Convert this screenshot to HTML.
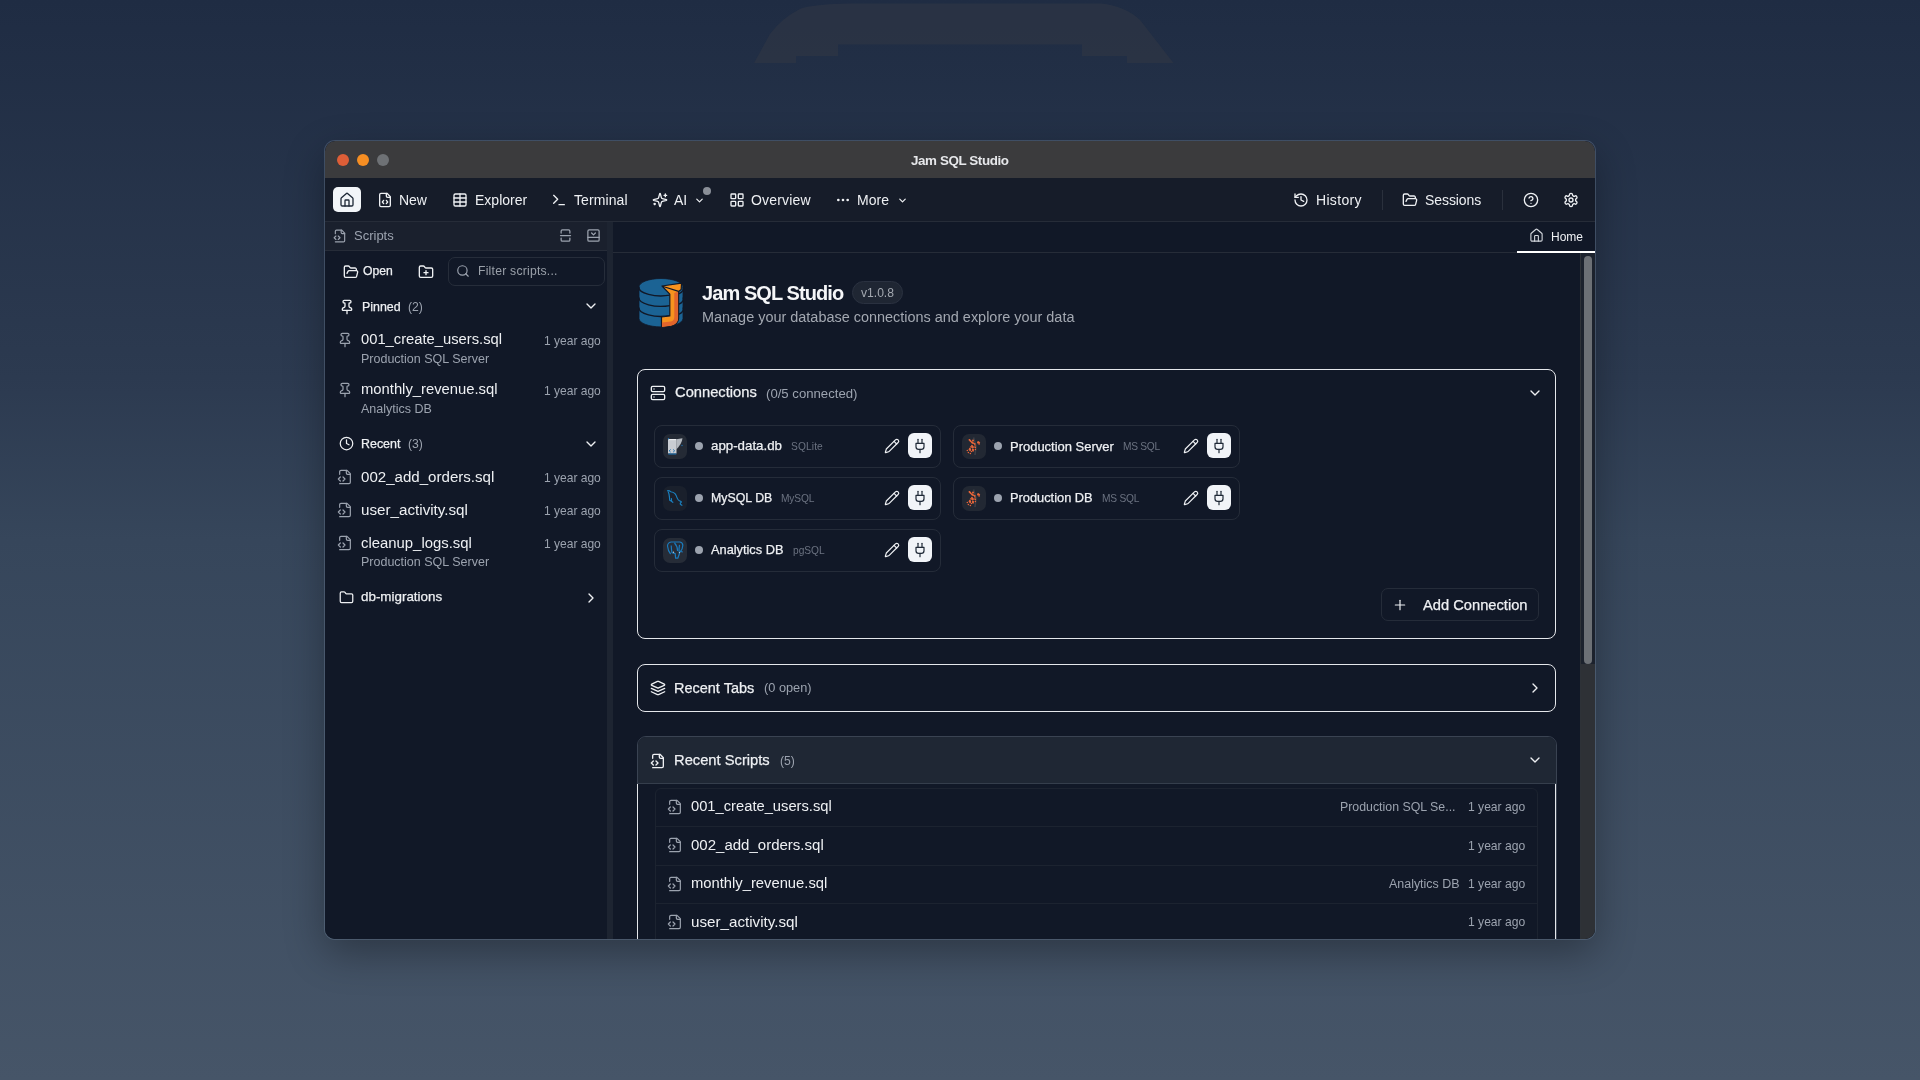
<!DOCTYPE html>
<html><head><meta charset="utf-8"><style>
html,body{margin:0;padding:0;width:1920px;height:1080px;overflow:hidden}
body{position:relative;background:linear-gradient(180deg,#1f2c43 0%,#2c3a50 35%,#36465b 50%,#465568 100%);font-family:"Liberation Sans",sans-serif}
.t{position:absolute;white-space:nowrap;line-height:1;will-change:transform}
.b{position:absolute}
.i{position:absolute;overflow:visible}
#win{position:absolute;left:325px;top:141px;width:1270px;height:798px;border-radius:10px;overflow:hidden}
</style></head><body>
<svg class="i" style="left:0;top:0;width:1920px;height:80px" viewBox="0 0 1920 80"><path d="M754 63 L770 34 Q782 18 800 9 Q812 4 852 3.5 L1101 3.5 Q1125 6 1140 20 L1173.5 63 L1127 63 L1127 56 L1082 56 L1082 44.5 L838 44.5 L838 56 L796 56 L796 63Z" fill="#2c3444" opacity=".85"/></svg>
<div class="b" style="left:325px;top:141px;width:1270px;height:798px;border-radius:10px;background:#111827;box-shadow:0 0 0 1px rgba(120,140,165,.35),0 14px 40px rgba(0,0,0,.32);overflow:hidden"></div>
<div style="position:absolute;left:0;top:0;width:1920px;height:1080px;clip-path:inset(141px 325px 141px 325px round 10px)">
<div class="b" style="left:325px;top:141px;width:1270px;height:37px;background:#3b3b3d;border-radius:10px 10px 0 0"></div>
<div class="b" style="left:337px;top:154px;width:12px;height:12px;border-radius:50%;background:#dd5e37"></div>
<div class="b" style="left:357px;top:154px;width:12px;height:12px;border-radius:50%;background:#f68e23"></div>
<div class="b" style="left:377px;top:154px;width:12px;height:12px;border-radius:50%;background:#6e7175"></div>
<div class="t" style="left:911.00px;top:153.66px;font-size:13.40px;color:#e6e7ea;letter-spacing:-0.404px;font-weight:700;">Jam SQL Studio</div>
<div class="b" style="left:325px;top:178px;width:1270px;height:44px;background:#161c29;border-bottom:1px solid #262c38;box-sizing:border-box"></div>
<div class="b" style="left:333px;top:187px;width:28px;height:25px;background:#f2f5f8;border-radius:5px"></div>
<svg class="i" style="left:339.00px;top:191.60px;width:16px;height:16px" viewBox="0 0 24 24" fill="none" stroke="#1f2937" stroke-width="2" stroke-linecap="round" stroke-linejoin="round"><path d="M15 21v-8a1 1 0 0 0-1-1h-4a1 1 0 0 0-1 1v8"/><path d="M3 10a2 2 0 0 1 .709-1.528l7-5.999a2 2 0 0 1 2.582 0l7 5.999A2 2 0 0 1 21 10v9a2 2 0 0 1-2 2H5a2 2 0 0 1-2-2z"/></svg>
<svg class="i" style="left:377.00px;top:191.80px;width:16px;height:16px" viewBox="0 0 24 24" fill="none" stroke="#eef0f3" stroke-width="2" stroke-linecap="round" stroke-linejoin="round"><path d="M10 12.5 8 15l2 2.5"/><path d="m14 12.5 2 2.5-2 2.5"/><path d="M14 2v4a2 2 0 0 0 2 2h4"/><path d="M15 2H6a2 2 0 0 0-2 2v16a2 2 0 0 0 2 2h12a2 2 0 0 0 2-2V7z"/></svg>
<div class="t" style="left:399.40px;top:192.95px;font-size:14.00px;color:#eef0f3;letter-spacing:-0.035px;">New</div>
<svg class="i" style="left:452.00px;top:191.60px;width:16px;height:16px" viewBox="0 0 24 24" fill="none" stroke="#eef0f3" stroke-width="2" stroke-linecap="round" stroke-linejoin="round"><path d="M12 3v18"/><rect width="18" height="18" x="3" y="3" rx="2"/><path d="M3 9h18"/><path d="M3 15h18"/></svg>
<div class="t" style="left:474.50px;top:192.95px;font-size:14.00px;color:#eef0f3;letter-spacing:0.007px;">Explorer</div>
<svg class="i" style="left:551.00px;top:191.60px;width:16px;height:16px" viewBox="0 0 24 24" fill="none" stroke="#eef0f3" stroke-width="2" stroke-linecap="round" stroke-linejoin="round"><polyline points="4 17 10 11 4 5"/><line x1="12" x2="20" y1="19" y2="19"/></svg>
<div class="t" style="left:574.00px;top:192.95px;font-size:14.00px;color:#eef0f3;letter-spacing:0.097px;">Terminal</div>
<svg class="i" style="left:652.00px;top:191.80px;width:16px;height:16px" viewBox="0 0 24 24" fill="none" stroke="#eef0f3" stroke-width="2" stroke-linecap="round" stroke-linejoin="round"><path d="M9.937 15.5A2 2 0 0 0 8.5 14.063l-6.135-1.582a.5.5 0 0 1 0-.962L8.5 9.936A2 2 0 0 0 9.937 8.5l1.582-6.135a.5.5 0 0 1 .963 0L14.063 8.5A2 2 0 0 0 15.5 9.937l6.135 1.581a.5.5 0 0 1 0 .964L15.5 14.063a2 2 0 0 0-1.437 1.437l-1.582 6.135a.5.5 0 0 1-.963 0z"/><path d="M20 3v4"/><path d="M22 5h-4"/><path d="M4 17v2"/><path d="M5 18H3"/></svg>
<div class="t" style="left:674.30px;top:192.95px;font-size:14.00px;color:#eef0f3;">AI</div>
<svg class="i" style="left:693.80px;top:194.60px;width:11px;height:11px" viewBox="0 0 24 24" fill="none" stroke="#eef0f3" stroke-width="2.6" stroke-linecap="round" stroke-linejoin="round"><path d="m6 9 6 6 6-6"/></svg>
<div class="b" style="left:703px;top:187.2px;width:8px;height:8px;border-radius:50%;background:#8a8f98"></div>
<svg class="i" style="left:728.80px;top:191.70px;width:16px;height:16px" viewBox="0 0 24 24" fill="none" stroke="#eef0f3" stroke-width="2" stroke-linecap="round" stroke-linejoin="round"><rect width="7" height="7" x="3" y="3" rx="1"/><rect width="7" height="7" x="14" y="3" rx="1"/><rect width="7" height="7" x="14" y="14" rx="1"/><rect width="7" height="7" x="3" y="14" rx="1"/></svg>
<div class="t" style="left:751.00px;top:192.95px;font-size:14.00px;color:#eef0f3;letter-spacing:0.174px;">Overview</div>
<svg class="i" style="left:835.00px;top:191.70px;width:16px;height:16px" viewBox="0 0 24 24" fill="none" stroke="#eef0f3" stroke-width="2" stroke-linecap="round" stroke-linejoin="round"><circle cx="12" cy="12" r="1"/><circle cx="19" cy="12" r="1"/><circle cx="5" cy="12" r="1"/></svg>
<div class="t" style="left:857.30px;top:192.95px;font-size:14.00px;color:#eef0f3;letter-spacing:0.060px;">More</div>
<svg class="i" style="left:896.60px;top:194.60px;width:11px;height:11px" viewBox="0 0 24 24" fill="none" stroke="#eef0f3" stroke-width="2.6" stroke-linecap="round" stroke-linejoin="round"><path d="m6 9 6 6 6-6"/></svg>
<svg class="i" style="left:1293.00px;top:191.80px;width:16px;height:16px" viewBox="0 0 24 24" fill="none" stroke="#eef0f3" stroke-width="2" stroke-linecap="round" stroke-linejoin="round"><path d="M3 12a9 9 0 1 0 9-9 9.75 9.75 0 0 0-6.74 2.74L3 8"/><path d="M3 3v5h5"/><path d="M12 7v5l4 2"/></svg>
<div class="t" style="left:1315.50px;top:192.95px;font-size:14.00px;color:#eef0f3;letter-spacing:0.327px;">History</div>
<div class="b" style="left:1382px;top:190px;width:1px;height:20px;background:#2a303c"></div>
<svg class="i" style="left:1402.30px;top:191.80px;width:16px;height:16px" viewBox="0 0 24 24" fill="none" stroke="#eef0f3" stroke-width="2" stroke-linecap="round" stroke-linejoin="round"><path d="m6 14 1.5-2.9A2 2 0 0 1 9.24 10H20a2 2 0 0 1 1.94 2.5l-1.54 6a2 2 0 0 1-1.95 1.5H4a2 2 0 0 1-2-2V5a2 2 0 0 1 2-2h3.9a2 2 0 0 1 1.69.9l.81 1.2a2 2 0 0 0 1.67.9H18a2 2 0 0 1 2 2v2"/></svg>
<div class="t" style="left:1425.00px;top:192.95px;font-size:14.00px;color:#eef0f3;letter-spacing:-0.077px;">Sessions</div>
<div class="b" style="left:1502px;top:190px;width:1px;height:20px;background:#2a303c"></div>
<svg class="i" style="left:1522.80px;top:191.80px;width:16px;height:16px" viewBox="0 0 24 24" fill="none" stroke="#eef0f3" stroke-width="2" stroke-linecap="round" stroke-linejoin="round"><circle cx="12" cy="12" r="10"/><path d="M9.09 9a3 3 0 0 1 5.83 1c0 2-3 3-3 3"/><path d="M12 17h.01"/></svg>
<svg class="i" style="left:1563.00px;top:191.80px;width:16px;height:16px" viewBox="0 0 24 24" fill="none" stroke="#eef0f3" stroke-width="2" stroke-linecap="round" stroke-linejoin="round"><path d="M12.22 2h-.44a2 2 0 0 0-2 2v.18a2 2 0 0 1-1 1.73l-.43.25a2 2 0 0 1-2 0l-.15-.08a2 2 0 0 0-2.73.73l-.22.38a2 2 0 0 0 .73 2.73l.15.1a2 2 0 0 1 1 1.72v.51a2 2 0 0 1-1 1.74l-.15.09a2 2 0 0 0-.73 2.730l.22.38a2 2 0 0 0 2.73.73l.15-.08a2 2 0 0 1 2 0l.43.25a2 2 0 0 1 1 1.73V20a2 2 0 0 0 2 2h.44a2 2 0 0 0 2-2v-.18a2 2 0 0 1 1-1.73l.43-.25a2 2 0 0 1 2 0l.15.08a2 2 0 0 0 2.73-.73l.22-.39a2 2 0 0 0-.73-2.73l-.15-.08a2 2 0 0 1-1-1.74v-.5a2 2 0 0 1 1-1.74l.15-.09a2 2 0 0 0 .73-2.73l-.22-.38a2 2 0 0 0-2.73-.73l-.15.08a2 2 0 0 1-2 0l-.43-.25a2 2 0 0 1-1-1.73V4a2 2 0 0 0-2-2z"/><circle cx="12" cy="12" r="3"/></svg>
<div class="b" style="left:325px;top:222px;width:282px;height:717px;background:#111827"></div>
<div class="b" style="left:325px;top:222px;width:282px;height:29px;background:#1a202d;border-bottom:1px solid #262c38;box-sizing:border-box"></div>
<div class="b" style="left:607px;top:222px;width:6px;height:717px;background:#1d2431"></div>
<svg class="i" style="left:333.08px;top:228.50px;width:14px;height:14px" viewBox="0 0 24 24" fill="none" stroke="#9ca3af" stroke-width="2" stroke-linecap="round" stroke-linejoin="round"><path d="M4 22h14a2 2 0 0 0 2-2V7l-5-5H6a2 2 0 0 0-2 2v4"/><path d="M14 2v4a2 2 0 0 0 2 2h4"/><path d="m5 12-3 3 3 3"/><path d="m9 18 3-3-3-3"/></svg>
<div class="t" style="left:353.50px;top:229.00px;font-size:13.00px;color:#9ca3af;">Scripts</div>
<svg class="i" style="left:557.50px;top:228.00px;width:15px;height:15px" viewBox="0 0 24 24" fill="none" stroke="#9ca3af" stroke-width="2" stroke-linecap="round" stroke-linejoin="round"><path d="M5 8V5c0-1 1-2 2-2h10c1 0 2 1 2 2v3"/><path d="M19 16v3c0 1-1 2-2 2H7c-1 0-2-1-2-2v-3"/><line x1="4" x2="20" y1="12" y2="12"/></svg>
<svg class="i" style="left:585.50px;top:228.00px;width:15px;height:15px" viewBox="0 0 24 24" fill="none" stroke="#9ca3af" stroke-width="2" stroke-linecap="round" stroke-linejoin="round"><rect width="18" height="18" x="3" y="3" rx="2"/><path d="M3 15h18"/><path d="m15 8-3 3-3-3"/></svg>
<svg class="i" style="left:342.70px;top:263.90px;width:16px;height:16px" viewBox="0 0 24 24" fill="none" stroke="#eef0f3" stroke-width="2" stroke-linecap="round" stroke-linejoin="round"><path d="m6 14 1.5-2.9A2 2 0 0 1 9.24 10H20a2 2 0 0 1 1.94 2.5l-1.54 6a2 2 0 0 1-1.95 1.5H4a2 2 0 0 1-2-2V5a2 2 0 0 1 2-2h3.9a2 2 0 0 1 1.69.9l.81 1.2a2 2 0 0 0 1.67.9H18a2 2 0 0 1 2 2v2"/></svg>
<div class="t" style="left:363.40px;top:265.37px;font-size:12.20px;color:#eef0f3;-webkit-text-stroke:0.25px currentColor;">Open</div>
<svg class="i" style="left:417.90px;top:263.90px;width:16px;height:16px" viewBox="0 0 24 24" fill="none" stroke="#eef0f3" stroke-width="2" stroke-linecap="round" stroke-linejoin="round"><path d="M12 10v6"/><path d="M9 13h6"/><path d="M20 20a2 2 0 0 0 2-2V8a2 2 0 0 0-2-2h-7.9a2 2 0 0 1-1.69-.9L9.6 3.9A2 2 0 0 0 7.930 3H4a2 2 0 0 0-2 2v13a2 2 0 0 0 2 2Z"/></svg>
<div class="b" style="left:448px;top:257px;width:157px;height:29px;border:1px solid #262d3a;border-radius:7px;box-sizing:border-box"></div>
<svg class="i" style="left:456.00px;top:264.30px;width:14px;height:14px" viewBox="0 0 24 24" fill="none" stroke="#9ca3af" stroke-width="2" stroke-linecap="round" stroke-linejoin="round"><circle cx="11" cy="11" r="8"/><path d="m21 21-4.3-4.3"/></svg>
<div class="t" style="left:477.80px;top:265.37px;font-size:12.20px;color:#9aa0a9;letter-spacing:0.228px;">Filter scripts...</div>
<svg class="i" style="left:339.00px;top:298.50px;width:16px;height:16px" viewBox="0 0 24 24" fill="none" stroke="#eef0f3" stroke-width="2" stroke-linecap="round" stroke-linejoin="round"><path d="M12 17v5"/><path d="M9 10.76a2 2 0 0 1-1.11 1.79l-1.78.9A2 2 0 0 0 5 15.24V16a1 1 0 0 0 1 1h12a1 1 0 0 0 1-1v-.76a2 2 0 0 0-1.11-1.79l-1.78-.9A2 2 0 0 1 15 10.76V7a1 1 0 0 1 1-1 2 2 0 0 0 0-4H8a2 2 0 0 0 0 4 1 1 0 0 1 1 1z"/></svg>
<div class="t" style="left:361.60px;top:300.90px;font-size:12.40px;color:#eef0f3;-webkit-text-stroke:0.25px currentColor;">Pinned</div>
<div class="t" style="left:407.90px;top:301.07px;font-size:12.20px;color:#9ca3af;">(2)</div>
<svg class="i" style="left:583.00px;top:298.30px;width:16px;height:16px" viewBox="0 0 24 24" fill="none" stroke="#eef0f3" stroke-width="2" stroke-linecap="round" stroke-linejoin="round"><path d="m6 9 6 6 6-6"/></svg>
<svg class="i" style="left:337.00px;top:331.80px;width:16px;height:16px" viewBox="0 0 24 24" fill="none" stroke="#9ca3af" stroke-width="1.8" stroke-linecap="round" stroke-linejoin="round"><path d="M12 17v5"/><path d="M9 10.76a2 2 0 0 1-1.11 1.79l-1.78.9A2 2 0 0 0 5 15.24V16a1 1 0 0 0 1 1h12a1 1 0 0 0 1-1v-.76a2 2 0 0 0-1.11-1.79l-1.78-.9A2 2 0 0 1 15 10.76V7a1 1 0 0 1 1-1 2 2 0 0 0 0-4H8a2 2 0 0 0 0 4 1 1 0 0 1 1 1z"/></svg>
<div class="t" style="left:361.40px;top:332.21px;font-size:14.76px;color:#eef0f3;">001_create_users.sql</div>
<div class="t" style="left:543.60px;top:334.52px;font-size:12.03px;color:#9ca3af;">1 year ago</div>
<div class="t" style="left:361.40px;top:352.62px;font-size:12.50px;color:#9ca3af;">Production SQL Server</div>
<svg class="i" style="left:337.00px;top:381.80px;width:16px;height:16px" viewBox="0 0 24 24" fill="none" stroke="#9ca3af" stroke-width="1.8" stroke-linecap="round" stroke-linejoin="round"><path d="M12 17v5"/><path d="M9 10.76a2 2 0 0 1-1.11 1.79l-1.78.9A2 2 0 0 0 5 15.24V16a1 1 0 0 0 1 1h12a1 1 0 0 0 1-1v-.76a2 2 0 0 0-1.11-1.79l-1.78-.9A2 2 0 0 1 15 10.76V7a1 1 0 0 1 1-1 2 2 0 0 0 0-4H8a2 2 0 0 0 0 4 1 1 0 0 1 1 1z"/></svg>
<div class="t" style="left:361.40px;top:382.17px;font-size:14.80px;color:#eef0f3;">monthly_revenue.sql</div>
<div class="t" style="left:543.60px;top:384.52px;font-size:12.03px;color:#9ca3af;">1 year ago</div>
<div class="t" style="left:361.40px;top:402.62px;font-size:12.50px;color:#9ca3af;">Analytics DB</div>
<svg class="i" style="left:339.20px;top:436.30px;width:15px;height:15px" viewBox="0 0 24 24" fill="none" stroke="#eef0f3" stroke-width="2" stroke-linecap="round" stroke-linejoin="round"><circle cx="12" cy="12" r="10"/><polyline points="12 6 12 12 16 14"/></svg>
<div class="t" style="left:361.30px;top:437.76px;font-size:12.45px;color:#eef0f3;-webkit-text-stroke:0.25px currentColor;">Recent</div>
<div class="t" style="left:408.30px;top:437.97px;font-size:12.20px;color:#9ca3af;">(3)</div>
<svg class="i" style="left:583.00px;top:435.80px;width:16px;height:16px" viewBox="0 0 24 24" fill="none" stroke="#eef0f3" stroke-width="2" stroke-linecap="round" stroke-linejoin="round"><path d="m6 9 6 6 6-6"/></svg>
<svg class="i" style="left:337.27px;top:469.00px;width:16px;height:16px" viewBox="0 0 24 24" fill="none" stroke="#9ca3af" stroke-width="1.8" stroke-linecap="round" stroke-linejoin="round"><path d="M4 22h14a2 2 0 0 0 2-2V7l-5-5H6a2 2 0 0 0-2 2v4"/><path d="M14 2v4a2 2 0 0 0 2 2h4"/><path d="m5 12-3 3 3 3"/><path d="m9 18 3-3-3-3"/></svg>
<div class="t" style="left:361.30px;top:469.23px;font-size:15.09px;color:#eef0f3;">002_add_orders.sql</div>
<div class="t" style="left:543.80px;top:471.82px;font-size:12.03px;color:#9ca3af;">1 year ago</div>
<svg class="i" style="left:337.27px;top:502.00px;width:16px;height:16px" viewBox="0 0 24 24" fill="none" stroke="#9ca3af" stroke-width="1.8" stroke-linecap="round" stroke-linejoin="round"><path d="M4 22h14a2 2 0 0 0 2-2V7l-5-5H6a2 2 0 0 0-2 2v4"/><path d="M14 2v4a2 2 0 0 0 2 2h4"/><path d="m5 12-3 3 3 3"/><path d="m9 18 3-3-3-3"/></svg>
<div class="t" style="left:361.30px;top:502.13px;font-size:15.20px;color:#eef0f3;">user_activity.sql</div>
<div class="t" style="left:543.80px;top:504.82px;font-size:12.03px;color:#9ca3af;">1 year ago</div>
<svg class="i" style="left:337.27px;top:535.30px;width:16px;height:16px" viewBox="0 0 24 24" fill="none" stroke="#9ca3af" stroke-width="1.8" stroke-linecap="round" stroke-linejoin="round"><path d="M4 22h14a2 2 0 0 0 2-2V7l-5-5H6a2 2 0 0 0-2 2v4"/><path d="M14 2v4a2 2 0 0 0 2 2h4"/><path d="m5 12-3 3 3 3"/><path d="m9 18 3-3-3-3"/></svg>
<div class="t" style="left:361.30px;top:535.70px;font-size:14.89px;color:#eef0f3;">cleanup_logs.sql</div>
<div class="t" style="left:543.80px;top:538.12px;font-size:12.03px;color:#9ca3af;">1 year ago</div>
<div class="t" style="left:361.30px;top:556.42px;font-size:12.50px;color:#9ca3af;">Production SQL Server</div>
<svg class="i" style="left:339.30px;top:589.50px;width:15px;height:15px" viewBox="0 0 24 24" fill="none" stroke="#eef0f3" stroke-width="2" stroke-linecap="round" stroke-linejoin="round"><path d="M20 20a2 2 0 0 0 2-2V8a2 2 0 0 0-2-2h-7.9a2 2 0 0 1-1.69-.9L9.6 3.9A2 2 0 0 0 7.93 3H4a2 2 0 0 0-2 2v13a2 2 0 0 0 2 2Z"/></svg>
<div class="t" style="left:361.30px;top:590.36px;font-size:13.40px;color:#eef0f3;-webkit-text-stroke:0.25px currentColor;">db-migrations</div>
<svg class="i" style="left:583.00px;top:589.50px;width:16px;height:16px" viewBox="0 0 24 24" fill="none" stroke="#eef0f3" stroke-width="2" stroke-linecap="round" stroke-linejoin="round"><path d="m9 18 6-6-6-6"/></svg>
<div class="b" style="left:613px;top:222px;width:982px;height:31px;background:#111827;border-bottom:1px solid #262c38;box-sizing:border-box"></div>
<svg class="i" style="left:1529.10px;top:228.20px;width:15px;height:15px" viewBox="0 0 24 24" fill="none" stroke="#d1d5db" stroke-width="1.8" stroke-linecap="round" stroke-linejoin="round"><path d="M15 21v-8a1 1 0 0 0-1-1h-4a1 1 0 0 0-1 1v8"/><path d="M3 10a2 2 0 0 1 .709-1.528l7-5.999a2 2 0 0 1 2.582 0l7 5.999A2 2 0 0 1 21 10v9a2 2 0 0 1-2 2H5a2 2 0 0 1-2-2z"/></svg>
<div class="t" style="left:1550.60px;top:230.84px;font-size:12.00px;color:#eef0f3;">Home</div>
<div class="b" style="left:1517px;top:251px;width:78px;height:2px;background:#ffffff"></div>
<div class="b" style="left:1580px;top:253px;width:1px;height:686px;background:#2e3238"></div>
<div class="b" style="left:1581px;top:253px;width:14px;height:686px;background:#1c222d"></div>
<div class="b" style="left:1581px;top:664px;width:14px;height:275px;background:#2e3136"></div>
<div class="b" style="left:1584px;top:256px;width:8px;height:408px;background:#6c7075;border-radius:4px"></div>
<svg class="i" style="left:634px;top:274px;width:56px;height:56px" viewBox="0 0 56 56"><path d="M5 13 V44.4 A22 8.5 0 0 0 49 44.4 V13 A22 8.5 0 0 0 5 13Z" fill="#1b6394"/><path d="M5 13 V44.4 A22 8.5 0 0 0 49 44.4 V13 A22 8.5 0 0 0 5 13Z" fill="none" stroke="#111827" stroke-width="0.8"/><g fill="none" stroke="#111827" stroke-width="1.3"><path d="M5 13 A22 8.5 0 0 0 36 21.2"/><path d="M44.6 20 A22 8.5 0 0 0 49 13"/><path d="M5 23.4 A22 8.5 0 0 0 36 31.6"/><path d="M44.6 30.4 A22 8.5 0 0 0 49 23.4"/><path d="M5 33.5 A22 8.5 0 0 0 36 41.7"/><path d="M44.6 40.5 A22 8.5 0 0 0 49 33.5"/></g><path d="M28 12 L47.5 9.2 L47.2 15.5 L44.6 17.4 L44.6 44.5 Q44.2 50.5 37 52.2 L27.5 53.4 L27.5 43 L35.8 42 L35.8 20.2 Z" fill="#f7931e" stroke="#111827" stroke-width="1.2" stroke-linejoin="round"/><path d="M40.3 19 L44.1 17.6 L44.1 44.5 Q43.8 50 37 51.8 L28 52.9 L28 48.5 L37 47.6 Q40.3 46.5 40.3 43Z" fill="#e2652c"/><path d="M30.5 12.6 L46.8 10 L44.4 14.6 Z" fill="#111827" opacity=".0"/><path d="M28.5 12.2 L44.6 17.4" stroke="#111827" stroke-width="1.2" fill="none"/></svg>
<div class="t" style="left:701.50px;top:282.97px;font-size:20.00px;color:#f5f6f8;letter-spacing:-0.923px;font-weight:700;">Jam SQL Studio</div>
<div class="b" style="left:852px;top:281px;width:51px;height:23px;background:#1f2633;border:1px solid #2a3140;border-radius:12px;box-sizing:border-box"></div>
<div class="t" style="left:861.00px;top:286.76px;font-size:12.10px;color:#a3a8b0;">v1.0.8</div>
<div class="t" style="left:701.50px;top:309.58px;font-size:14.44px;color:#a3a8b1;">Manage your database connections and explore your data</div>
<div class="b" style="left:637px;top:369px;width:919px;height:270px;border:1px solid #e5e7eb;border-radius:8px;box-sizing:border-box"></div>
<svg class="i" style="left:650.00px;top:384.80px;width:16px;height:16px" viewBox="0 0 24 24" fill="none" stroke="#eef0f3" stroke-width="2" stroke-linecap="round" stroke-linejoin="round"><rect width="20" height="8" x="2" y="2" rx="2" ry="2"/><rect width="20" height="8" x="2" y="14" rx="2" ry="2"/><line x1="6" x2="6.01" y1="6" y2="6"/><line x1="6" x2="6.01" y1="18" y2="18"/></svg>
<div class="t" style="left:674.70px;top:385.43px;font-size:14.73px;color:#eef0f3;-webkit-text-stroke:0.25px currentColor;">Connections</div>
<div class="t" style="left:766.00px;top:386.75px;font-size:13.17px;color:#9ca3af;">(0/5 connected)</div>
<svg class="i" style="left:1527.00px;top:384.60px;width:16px;height:16px" viewBox="0 0 24 24" fill="none" stroke="#eef0f3" stroke-width="2" stroke-linecap="round" stroke-linejoin="round"><path d="m6 9 6 6 6-6"/></svg>
<div class="b" style="left:654px;top:424.5px;width:287px;height:43px;border:1px solid #252c39;border-radius:8px;box-sizing:border-box"></div>
<div class="b" style="left:663px;top:433.5px;width:24px;height:25px;border-radius:7px;background:#242a35"></div>
<svg class="i" style="left:663px;top:433.5px;width:24px;height:25px" viewBox="0 0 24 25"><path d="M5 5 h8.5 v14.5 h-8.5z" fill="#c9cdd3"/><path d="M13.3 5.2 L19.5 4.3 Q18.8 10 13.3 15.5z" fill="#b4b9c0"/><path d="M5.5 5.6 h7.5" stroke="#eceef1" stroke-width="1.1"/><path d="M7.6 15.5 l-1.4 1.3 1.4 1.3 M10.2 15.5 l1.4 1.3 -1.4 1.3" stroke="#1b6fb0" stroke-width="1" fill="none"/><path d="M5.3 20 h8" stroke="#1b6fb0" stroke-width="1.1"/><circle cx="5.5" cy="4.8" r=".7" fill="#1b6fb0"/><circle cx="19" cy="11.5" r=".7" fill="#1b6fb0"/></svg>
<div class="b" style="left:695px;top:442.0px;width:8px;height:8px;border-radius:50%;background:#9ca3af"></div>
<div class="t" style="left:711.00px;top:439.43px;font-size:13.31px;color:#eef0f3;-webkit-text-stroke:0.25px currentColor;">app-data.db</div>
<div class="t" style="left:790.50px;top:441.87px;font-size:10.20px;color:#6b7280;letter-spacing:0.128px;">SQLite</div>
<svg class="i" style="left:883.50px;top:438.00px;width:16px;height:16px" viewBox="0 0 24 24" fill="none" stroke="#eef0f3" stroke-width="1.8" stroke-linecap="round" stroke-linejoin="round"><path d="M21.174 6.812a1 1 0 0 0-3.986-3.987L3.842 16.174a2 2 0 0 0-.5.83l-1.321 4.352a.5.5 0 0 0 .623.622l4.353-1.32a2 2 0 0 0 .83-.497z"/><path d="m15 5 4 4"/></svg>
<div class="b" style="left:908px;top:433.0px;width:24px;height:25px;background:#f1f4f8;border-radius:6px"></div>
<svg class="i" style="left:912.00px;top:437.50px;width:16px;height:16px" viewBox="0 0 24 24" fill="none" stroke="#1f2937" stroke-width="1.8" stroke-linecap="round" stroke-linejoin="round"><path d="M12 22v-5"/><path d="M9 8V2"/><path d="M15 8V2"/><path d="M18 8v5a4 4 0 0 1-4 4h-4a4 4 0 0 1-4-4V8Z"/></svg>
<div class="b" style="left:953px;top:424.5px;width:287px;height:43px;border:1px solid #252c39;border-radius:8px;box-sizing:border-box"></div>
<div class="b" style="left:962px;top:433.5px;width:24px;height:25px;border-radius:7px;background:#222833"></div>
<svg class="i" style="left:962px;top:433.5px;width:24px;height:25px" viewBox="0 0 24 25"><path d="M11.5 3.5 L14 12 L13 21" stroke="#3a3f47" stroke-width="1.6" fill="none"/><path d="M7.5 5.8 L9.8 8.4 L12.8 10 M16 8.2 L17.5 8.8 M8.5 12.9 L12 13.1 M7.8 14.5 L8.2 16.6 M10.8 15 L11.2 17" stroke="#e8663a" stroke-width="1.3" fill="none" stroke-linecap="round"/><circle cx="7.4" cy="5.9" r="0.83" fill="#e8663a"/><circle cx="8.4" cy="6.9" r="0.83" fill="#e8663a"/><circle cx="11" cy="6.4" r="0.98" fill="#e8663a"/><circle cx="10.4" cy="8.6" r="1.05" fill="#e8663a"/><circle cx="12.8" cy="10.1" r="0.83" fill="#e8663a"/><circle cx="16.3" cy="8.4" r="1.20" fill="#e8663a"/><circle cx="17.1" cy="10" r="0.83" fill="#e8663a"/><circle cx="10" cy="11.6" r="0.90" fill="#e8663a"/><circle cx="10.4" cy="13" r="1.05" fill="#e8663a"/><circle cx="13" cy="12" r="0.75" fill="#e8663a"/><circle cx="13.4" cy="13.5" r="0.75" fill="#e8663a"/><circle cx="7.9" cy="15.4" r="1.20" fill="#e8663a"/><circle cx="11" cy="16" r="1.05" fill="#e8663a"/><circle cx="13.4" cy="15.4" r="0.75" fill="#e8663a"/><circle cx="5.3" cy="16.6" r="0.75" fill="#e8663a"/><circle cx="9.5" cy="17.4" r="0.75" fill="#e8663a"/><circle cx="6.4" cy="18.4" r="0.75" fill="#e8663a"/><circle cx="8.4" cy="19.5" r="0.75" fill="#e8663a"/></svg>
<div class="b" style="left:994px;top:442.0px;width:8px;height:8px;border-radius:50%;background:#9ca3af"></div>
<div class="t" style="left:1010.00px;top:439.71px;font-size:12.98px;color:#eef0f3;-webkit-text-stroke:0.25px currentColor;">Production Server</div>
<div class="t" style="left:1122.80px;top:441.87px;font-size:10.20px;color:#6b7280;letter-spacing:-0.271px;">MS SQL</div>
<svg class="i" style="left:1182.50px;top:438.00px;width:16px;height:16px" viewBox="0 0 24 24" fill="none" stroke="#eef0f3" stroke-width="1.8" stroke-linecap="round" stroke-linejoin="round"><path d="M21.174 6.812a1 1 0 0 0-3.986-3.987L3.842 16.174a2 2 0 0 0-.5.83l-1.321 4.352a.5.5 0 0 0 .623.622l4.353-1.32a2 2 0 0 0 .83-.497z"/><path d="m15 5 4 4"/></svg>
<div class="b" style="left:1207px;top:433.0px;width:24px;height:25px;background:#f1f4f8;border-radius:6px"></div>
<svg class="i" style="left:1211.00px;top:437.50px;width:16px;height:16px" viewBox="0 0 24 24" fill="none" stroke="#1f2937" stroke-width="1.8" stroke-linecap="round" stroke-linejoin="round"><path d="M12 22v-5"/><path d="M9 8V2"/><path d="M15 8V2"/><path d="M18 8v5a4 4 0 0 1-4 4h-4a4 4 0 0 1-4-4V8Z"/></svg>
<div class="b" style="left:654px;top:476.5px;width:287px;height:43px;border:1px solid #252c39;border-radius:8px;box-sizing:border-box"></div>
<div class="b" style="left:663px;top:485.5px;width:24px;height:25px;border-radius:7px;background:#1a202c"></div>
<svg class="i" style="left:663px;top:485.5px;width:24px;height:25px" viewBox="0 0 24 25"><path d="M4.5 4.8 Q6 4.2 7.6 5.7 Q10.5 6 12 7.6 Q13.5 9.5 14.2 12.1 Q15 14 16.4 14.8 Q17.8 15.3 18.4 15.9 M5.3 6 Q6.3 8 6.4 10.9 L6.7 14.3 Q8 15 9.8 16.3 M8.4 12.6 L8.6 15.2 M18.4 15.9 Q17 16.8 17.2 17.8 Q18 18.8 18.9 19.3" stroke="#1a80c0" stroke-width="1.15" fill="none" stroke-linecap="round" stroke-linejoin="round"/></svg>
<div class="b" style="left:695px;top:494.0px;width:8px;height:8px;border-radius:50%;background:#9ca3af"></div>
<div class="t" style="left:711.00px;top:492.25px;font-size:12.35px;color:#eef0f3;-webkit-text-stroke:0.25px currentColor;">MySQL DB</div>
<div class="t" style="left:780.80px;top:493.87px;font-size:10.20px;color:#6b7280;letter-spacing:-0.154px;">MySQL</div>
<svg class="i" style="left:883.50px;top:490.00px;width:16px;height:16px" viewBox="0 0 24 24" fill="none" stroke="#eef0f3" stroke-width="1.8" stroke-linecap="round" stroke-linejoin="round"><path d="M21.174 6.812a1 1 0 0 0-3.986-3.987L3.842 16.174a2 2 0 0 0-.5.83l-1.321 4.352a.5.5 0 0 0 .623.622l4.353-1.32a2 2 0 0 0 .83-.497z"/><path d="m15 5 4 4"/></svg>
<div class="b" style="left:908px;top:485.0px;width:24px;height:25px;background:#f1f4f8;border-radius:6px"></div>
<svg class="i" style="left:912.00px;top:489.50px;width:16px;height:16px" viewBox="0 0 24 24" fill="none" stroke="#1f2937" stroke-width="1.8" stroke-linecap="round" stroke-linejoin="round"><path d="M12 22v-5"/><path d="M9 8V2"/><path d="M15 8V2"/><path d="M18 8v5a4 4 0 0 1-4 4h-4a4 4 0 0 1-4-4V8Z"/></svg>
<div class="b" style="left:953px;top:476.5px;width:287px;height:43px;border:1px solid #252c39;border-radius:8px;box-sizing:border-box"></div>
<div class="b" style="left:962px;top:485.5px;width:24px;height:25px;border-radius:7px;background:#222833"></div>
<svg class="i" style="left:962px;top:485.5px;width:24px;height:25px" viewBox="0 0 24 25"><path d="M11.5 3.5 L14 12 L13 21" stroke="#3a3f47" stroke-width="1.6" fill="none"/><path d="M7.5 5.8 L9.8 8.4 L12.8 10 M16 8.2 L17.5 8.8 M8.5 12.9 L12 13.1 M7.8 14.5 L8.2 16.6 M10.8 15 L11.2 17" stroke="#e8663a" stroke-width="1.3" fill="none" stroke-linecap="round"/><circle cx="7.4" cy="5.9" r="0.83" fill="#e8663a"/><circle cx="8.4" cy="6.9" r="0.83" fill="#e8663a"/><circle cx="11" cy="6.4" r="0.98" fill="#e8663a"/><circle cx="10.4" cy="8.6" r="1.05" fill="#e8663a"/><circle cx="12.8" cy="10.1" r="0.83" fill="#e8663a"/><circle cx="16.3" cy="8.4" r="1.20" fill="#e8663a"/><circle cx="17.1" cy="10" r="0.83" fill="#e8663a"/><circle cx="10" cy="11.6" r="0.90" fill="#e8663a"/><circle cx="10.4" cy="13" r="1.05" fill="#e8663a"/><circle cx="13" cy="12" r="0.75" fill="#e8663a"/><circle cx="13.4" cy="13.5" r="0.75" fill="#e8663a"/><circle cx="7.9" cy="15.4" r="1.20" fill="#e8663a"/><circle cx="11" cy="16" r="1.05" fill="#e8663a"/><circle cx="13.4" cy="15.4" r="0.75" fill="#e8663a"/><circle cx="5.3" cy="16.6" r="0.75" fill="#e8663a"/><circle cx="9.5" cy="17.4" r="0.75" fill="#e8663a"/><circle cx="6.4" cy="18.4" r="0.75" fill="#e8663a"/><circle cx="8.4" cy="19.5" r="0.75" fill="#e8663a"/></svg>
<div class="b" style="left:994px;top:494.0px;width:8px;height:8px;border-radius:50%;background:#9ca3af"></div>
<div class="t" style="left:1010.00px;top:491.85px;font-size:12.82px;color:#eef0f3;-webkit-text-stroke:0.25px currentColor;">Production DB</div>
<div class="t" style="left:1101.70px;top:493.87px;font-size:10.20px;color:#6b7280;letter-spacing:-0.211px;">MS SQL</div>
<svg class="i" style="left:1182.50px;top:490.00px;width:16px;height:16px" viewBox="0 0 24 24" fill="none" stroke="#eef0f3" stroke-width="1.8" stroke-linecap="round" stroke-linejoin="round"><path d="M21.174 6.812a1 1 0 0 0-3.986-3.987L3.842 16.174a2 2 0 0 0-.5.83l-1.321 4.352a.5.5 0 0 0 .623.622l4.353-1.32a2 2 0 0 0 .83-.497z"/><path d="m15 5 4 4"/></svg>
<div class="b" style="left:1207px;top:485.0px;width:24px;height:25px;background:#f1f4f8;border-radius:6px"></div>
<svg class="i" style="left:1211.00px;top:489.50px;width:16px;height:16px" viewBox="0 0 24 24" fill="none" stroke="#1f2937" stroke-width="1.8" stroke-linecap="round" stroke-linejoin="round"><path d="M12 22v-5"/><path d="M9 8V2"/><path d="M15 8V2"/><path d="M18 8v5a4 4 0 0 1-4 4h-4a4 4 0 0 1-4-4V8Z"/></svg>
<div class="b" style="left:654px;top:528.5px;width:287px;height:43px;border:1px solid #252c39;border-radius:8px;box-sizing:border-box"></div>
<div class="b" style="left:663px;top:537.5px;width:24px;height:25px;border-radius:7px;background:#262c37"></div>
<svg class="i" style="left:663px;top:537.5px;width:24px;height:25px" viewBox="0 0 24 25"><path d="M7.6 16 Q5 13 4.5 8 Q4.8 4.5 8 4 L17 4 Q20 4.8 19.8 7.5 Q19.6 11 17.5 13.5 L19.8 14 M8.2 7.5 Q8.4 12 9 14.6 L12.2 15.6 L12.6 20.2 L14.8 20.2 L16.4 15.8 Q15.5 11 16.5 6.8 M11.5 5 Q14.5 8 14.6 13" stroke="#1a7bbd" stroke-width="1.2" fill="none" stroke-linejoin="round"/><circle cx="10.5" cy="14.2" r=".6" fill="#ddd"/><circle cx="16.7" cy="14.6" r=".6" fill="#ddd"/></svg>
<div class="b" style="left:695px;top:546.0px;width:8px;height:8px;border-radius:50%;background:#9ca3af"></div>
<div class="t" style="left:711.00px;top:543.88px;font-size:12.79px;color:#eef0f3;-webkit-text-stroke:0.25px currentColor;">Analytics DB</div>
<div class="t" style="left:792.50px;top:545.87px;font-size:10.20px;color:#6b7280;letter-spacing:-0.018px;">pgSQL</div>
<svg class="i" style="left:883.50px;top:542.00px;width:16px;height:16px" viewBox="0 0 24 24" fill="none" stroke="#eef0f3" stroke-width="1.8" stroke-linecap="round" stroke-linejoin="round"><path d="M21.174 6.812a1 1 0 0 0-3.986-3.987L3.842 16.174a2 2 0 0 0-.5.83l-1.321 4.352a.5.5 0 0 0 .623.622l4.353-1.32a2 2 0 0 0 .83-.497z"/><path d="m15 5 4 4"/></svg>
<div class="b" style="left:908px;top:537.0px;width:24px;height:25px;background:#f1f4f8;border-radius:6px"></div>
<svg class="i" style="left:912.00px;top:541.50px;width:16px;height:16px" viewBox="0 0 24 24" fill="none" stroke="#1f2937" stroke-width="1.8" stroke-linecap="round" stroke-linejoin="round"><path d="M12 22v-5"/><path d="M9 8V2"/><path d="M15 8V2"/><path d="M18 8v5a4 4 0 0 1-4 4h-4a4 4 0 0 1-4-4V8Z"/></svg>
<div class="b" style="left:1381px;top:588px;width:158px;height:33px;border:1px solid #252c39;border-radius:7px;box-sizing:border-box"></div>
<svg class="i" style="left:1392.00px;top:597.00px;width:16px;height:16px" viewBox="0 0 24 24" fill="none" stroke="#eef0f3" stroke-width="1.8" stroke-linecap="round" stroke-linejoin="round"><path d="M5 12h14"/><path d="M12 5v14"/></svg>
<div class="t" style="left:1422.90px;top:597.56px;font-size:14.69px;color:#eef0f3;-webkit-text-stroke:0.25px currentColor;">Add Connection</div>
<div class="b" style="left:637px;top:664px;width:919px;height:48px;border:1px solid #e5e7eb;border-radius:8px;box-sizing:border-box"></div>
<svg class="i" style="left:650.20px;top:679.80px;width:16px;height:16px" viewBox="0 0 24 24" fill="none" stroke="#eef0f3" stroke-width="2" stroke-linecap="round" stroke-linejoin="round"><path d="M12.83 2.18a2 2 0 0 0-1.66 0L2.6 6.08a1 1 0 0 0 0 1.83l8.58 3.91a2 2 0 0 0 1.66 0l8.58-3.9a1 1 0 0 0 0-1.83Z"/><path d="m22 17.65-9.17 4.16a2 2 0 0 1-1.66 0L2 17.65"/><path d="m22 12.65-9.17 4.16a2 2 0 0 1-1.66 0L2 12.65"/></svg>
<div class="t" style="left:674.00px;top:680.73px;font-size:14.49px;color:#eef0f3;-webkit-text-stroke:0.25px currentColor;">Recent Tabs</div>
<div class="t" style="left:763.80px;top:682.19px;font-size:12.77px;color:#9ca3af;">(0 open)</div>
<svg class="i" style="left:1527.00px;top:679.90px;width:16px;height:16px" viewBox="0 0 24 24" fill="none" stroke="#eef0f3" stroke-width="2" stroke-linecap="round" stroke-linejoin="round"><path d="m9 18 6-6-6-6"/></svg>
<div class="b" style="left:636.5px;top:736px;width:920px;height:220px;border:1px solid #3a4352;border-radius:9px;box-sizing:border-box"></div>
<div class="b" style="left:637.5px;top:737px;width:918px;height:47px;background:#1f2734;border-radius:8px 8px 0 0;border-bottom:1px solid #353e4c;box-sizing:border-box"></div>
<div class="b" style="left:637px;top:784px;width:1px;height:160px;background:#e5e7eb"></div>
<div class="b" style="left:1555px;top:784px;width:1px;height:160px;background:#e5e7eb"></div>
<svg class="i" style="left:650.07px;top:752.50px;width:16px;height:16px" viewBox="0 0 24 24" fill="none" stroke="#eef0f3" stroke-width="2" stroke-linecap="round" stroke-linejoin="round"><path d="M4 22h14a2 2 0 0 0 2-2V7l-5-5H6a2 2 0 0 0-2 2v4"/><path d="M14 2v4a2 2 0 0 0 2 2h4"/><path d="m5 12-3 3 3 3"/><path d="m9 18 3-3-3-3"/></svg>
<div class="t" style="left:674.00px;top:752.94px;font-size:14.72px;color:#eef0f3;-webkit-text-stroke:0.25px currentColor;">Recent Scripts</div>
<div class="t" style="left:779.50px;top:755.07px;font-size:12.20px;color:#9ca3af;">(5)</div>
<svg class="i" style="left:1527.00px;top:752.30px;width:16px;height:16px" viewBox="0 0 24 24" fill="none" stroke="#eef0f3" stroke-width="2" stroke-linecap="round" stroke-linejoin="round"><path d="m6 9 6 6 6-6"/></svg>
<div class="b" style="left:655px;top:788px;width:883px;height:160px;border:1px solid #1c2330;border-radius:6px;box-sizing:border-box"></div>
<svg class="i" style="left:667.17px;top:799.15px;width:16px;height:16px" viewBox="0 0 24 24" fill="none" stroke="#9ca3af" stroke-width="1.8" stroke-linecap="round" stroke-linejoin="round"><path d="M4 22h14a2 2 0 0 0 2-2V7l-5-5H6a2 2 0 0 0-2 2v4"/><path d="M14 2v4a2 2 0 0 0 2 2h4"/><path d="m5 12-3 3 3 3"/><path d="m9 18 3-3-3-3"/></svg>
<div class="t" style="left:691.40px;top:799.23px;font-size:14.73px;color:#eef0f3;">001_create_users.sql</div>
<div class="t" style="left:1468.40px;top:801.46px;font-size:12.10px;color:#9ca3af;">1 year ago</div>
<div class="t" style="left:1340.40px;top:801.25px;font-size:12.35px;color:#9ca3af;">Production SQL Se...</div>
<div class="b" style="left:656px;top:826.2px;width:881px;height:1px;background:#1c2330"></div>
<svg class="i" style="left:667.17px;top:837.45px;width:16px;height:16px" viewBox="0 0 24 24" fill="none" stroke="#9ca3af" stroke-width="1.8" stroke-linecap="round" stroke-linejoin="round"><path d="M4 22h14a2 2 0 0 0 2-2V7l-5-5H6a2 2 0 0 0-2 2v4"/><path d="M14 2v4a2 2 0 0 0 2 2h4"/><path d="m5 12-3 3 3 3"/><path d="m9 18 3-3-3-3"/></svg>
<div class="t" style="left:691.40px;top:837.28px;font-size:15.02px;color:#eef0f3;">002_add_orders.sql</div>
<div class="t" style="left:1468.40px;top:839.76px;font-size:12.10px;color:#9ca3af;">1 year ago</div>
<div class="b" style="left:656px;top:864.5px;width:881px;height:1px;background:#1c2330"></div>
<svg class="i" style="left:667.17px;top:875.85px;width:16px;height:16px" viewBox="0 0 24 24" fill="none" stroke="#9ca3af" stroke-width="1.8" stroke-linecap="round" stroke-linejoin="round"><path d="M4 22h14a2 2 0 0 0 2-2V7l-5-5H6a2 2 0 0 0-2 2v4"/><path d="M14 2v4a2 2 0 0 0 2 2h4"/><path d="m5 12-3 3 3 3"/><path d="m9 18 3-3-3-3"/></svg>
<div class="t" style="left:691.40px;top:875.89px;font-size:14.78px;color:#eef0f3;">monthly_revenue.sql</div>
<div class="t" style="left:1468.40px;top:878.16px;font-size:12.10px;color:#9ca3af;">1 year ago</div>
<div class="t" style="left:1389.30px;top:877.86px;font-size:12.45px;color:#9ca3af;">Analytics DB</div>
<div class="b" style="left:656px;top:902.9px;width:881px;height:1px;background:#1c2330"></div>
<svg class="i" style="left:667.17px;top:914.15px;width:16px;height:16px" viewBox="0 0 24 24" fill="none" stroke="#9ca3af" stroke-width="1.8" stroke-linecap="round" stroke-linejoin="round"><path d="M4 22h14a2 2 0 0 0 2-2V7l-5-5H6a2 2 0 0 0-2 2v4"/><path d="M14 2v4a2 2 0 0 0 2 2h4"/><path d="m5 12-3 3 3 3"/><path d="m9 18 3-3-3-3"/></svg>
<div class="t" style="left:691.40px;top:913.85px;font-size:15.18px;color:#eef0f3;">user_activity.sql</div>
<div class="t" style="left:1468.40px;top:916.46px;font-size:12.10px;color:#9ca3af;">1 year ago</div>
</div>
</body></html>
